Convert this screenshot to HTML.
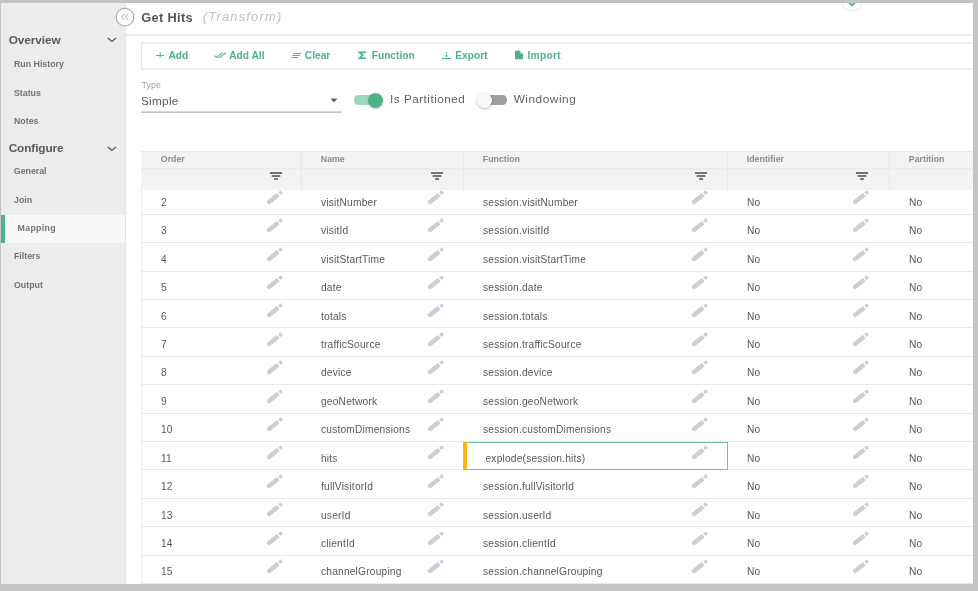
<!DOCTYPE html>
<html><head><meta charset="utf-8"><style>
html,body{margin:0;padding:0;width:978px;height:591px;overflow:hidden;background:#fff}
#w{position:absolute;left:0;top:0;width:978px;height:591px;overflow:hidden;filter:blur(0.35px)}
body{position:relative;font-family:"Liberation Sans",sans-serif}
.t{position:absolute;white-space:nowrap;line-height:1}
.r{position:absolute;display:block}
</style></head><body><div id="w">
<div class="r" style="left:0px;top:0px;width:126px;height:591px;background:#ebecee;"></div>
<div class="r" style="left:1px;top:215px;width:125px;height:28px;background:#f7f8f8;"></div>
<div class="r" style="left:1px;top:215px;width:4px;height:28px;background:#4cb287;"></div>
<div class="r" style="left:125px;top:0px;width:1px;height:591px;background:#e4e5e7;"></div>
<div class="t" style="left:8.80px;top:35.00px;font-size:11.8px;color:#595959;font-weight:bold;font-style:normal;letter-spacing:-0.1px;">Overview</div>
<div class="t" style="left:8.70px;top:143.00px;font-size:11.8px;color:#595959;font-weight:bold;font-style:normal;letter-spacing:-0.1px;">Configure</div>
<svg class="r" style="left:107.1px;top:37.1px" width="10" height="6" viewBox="0 0 10 6"><path d="M0.8 0.9 L4.9 4.4 L9.0 0.9" fill="none" stroke="#5a5a5a" stroke-width="1.3"/></svg>
<svg class="r" style="left:107.1px;top:145.7px" width="10" height="6" viewBox="0 0 10 6"><path d="M0.8 0.9 L4.9 4.4 L9.0 0.9" fill="none" stroke="#5a5a5a" stroke-width="1.3"/></svg>
<div class="t" style="left:14.00px;top:60.00px;font-size:8.8px;color:#727272;font-weight:bold;font-style:normal;letter-spacing:0px;">Run History</div>
<div class="t" style="left:14.00px;top:89.00px;font-size:8.8px;color:#727272;font-weight:bold;font-style:normal;letter-spacing:0px;">Status</div>
<div class="t" style="left:14.00px;top:117.00px;font-size:8.8px;color:#727272;font-weight:bold;font-style:normal;letter-spacing:0px;">Notes</div>
<div class="t" style="left:13.80px;top:167.00px;font-size:8.8px;color:#727272;font-weight:bold;font-style:normal;letter-spacing:0px;">General</div>
<div class="t" style="left:14.00px;top:196.00px;font-size:8.8px;color:#727272;font-weight:bold;font-style:normal;letter-spacing:0px;">Join</div>
<div class="t" style="left:17.60px;top:224.00px;font-size:8.8px;color:#727272;font-weight:bold;font-style:normal;letter-spacing:0.3px;">Mapping</div>
<div class="t" style="left:14.00px;top:252.00px;font-size:8.8px;color:#727272;font-weight:bold;font-style:normal;letter-spacing:0px;">Filters</div>
<div class="t" style="left:14.00px;top:281.00px;font-size:8.8px;color:#727272;font-weight:bold;font-style:normal;letter-spacing:0px;">Output</div>
<div class="r" style="left:126px;top:0px;width:847px;height:591px;background:#ffffff;"></div>
<div class="t" style="left:141.20px;top:12.00px;font-size:12.8px;color:#555;font-weight:bold;font-style:normal;letter-spacing:0.35px;">Get Hits</div>
<div class="t" style="left:202.80px;top:11.00px;font-size:12.8px;color:#b9c2cc;font-weight:normal;font-style:italic;letter-spacing:1.25px;">(Transform)</div>
<div class="r" style="left:126px;top:34px;width:847px;height:1px;background:#ebebeb;"></div>
<div class="r" style="left:126px;top:35px;width:847px;height:1px;background:#eeeeee;"></div>
<svg class="r" style="left:114.9px;top:7px" width="20" height="20" viewBox="0 0 20 20"><circle cx="10" cy="10.2" r="8.8" fill="#fff" stroke="#ababab" stroke-width="1.1"/><path d="M9.4 6.8 L6.5 9.9 L9.4 13 M13.3 6.8 L10.4 9.9 L13.3 13" fill="none" stroke="#a5a5a5" stroke-width="1"/></svg>
<svg class="r" style="left:839.6px;top:-12.3px" width="24" height="24" viewBox="0 0 24 24"><circle cx="12" cy="12" r="11" fill="#fff" stroke="#e2e5e8" stroke-width="1"/><path d="M8.6 14.2 L12 17.4 L15.4 14.2" fill="none" stroke="#4cb287" stroke-width="1.8"/></svg>
<div class="r" style="left:141px;top:42px;width:832px;height:1px;background:#eeeeee;"></div>
<div class="r" style="left:141px;top:43px;width:832px;height:1px;background:#f0f0f0;"></div>
<div class="r" style="left:141px;top:68px;width:832px;height:1px;background:#eeeeee;"></div>
<div class="r" style="left:141px;top:69px;width:832px;height:1px;background:#f0f0f0;"></div>
<div class="r" style="left:141px;top:42px;width:1px;height:28px;background:#e6e6e6;"></div>
<div class="t" style="left:168.40px;top:51.00px;font-size:10.2px;color:#4cb287;font-weight:bold;font-style:normal;letter-spacing:0px;">Add</div>
<div class="t" style="left:229.20px;top:51.00px;font-size:10.2px;color:#4cb287;font-weight:bold;font-style:normal;letter-spacing:0px;">Add All</div>
<div class="t" style="left:304.80px;top:51.00px;font-size:10.2px;color:#4cb287;font-weight:bold;font-style:normal;letter-spacing:0px;">Clear</div>
<div class="t" style="left:371.70px;top:51.00px;font-size:10.2px;color:#4cb287;font-weight:bold;font-style:normal;letter-spacing:0px;">Function</div>
<div class="t" style="left:455.30px;top:51.00px;font-size:10.2px;color:#4cb287;font-weight:bold;font-style:normal;letter-spacing:0px;">Export</div>
<div class="t" style="left:527.40px;top:51.00px;font-size:10.2px;color:#4cb287;font-weight:bold;font-style:normal;letter-spacing:0.3px;">Import</div>
<svg class="r" style="left:155px;top:50px" width="10" height="10" viewBox="0 0 10 10"><path d="M5.2 2.2V7.8M1.1 5.5H8.9" stroke="#4cb287" stroke-width="1.1"/></svg>
<svg class="r" style="left:213px;top:50px" width="14" height="10" viewBox="0 0 14 10"><path d="M1.4 5.8 L3.8 7.5 L9.2 2.8 M4.5 6.5 L6.6 7.5 L13 2.8" fill="none" stroke="#4cb287" stroke-width="1.2" stroke-opacity="0.85"/></svg>
<svg class="r" style="left:290px;top:50px" width="12" height="10" viewBox="0 0 12 10"><path d="M3.5 3.5H11 M2.5 5.5H10 M1.5 7.5H8" fill="none" stroke="#4cb287" stroke-width="1"/></svg>
<svg class="r" style="left:358px;top:50px" width="9" height="10" viewBox="0 0 9 10"><path d="M7.9 2.4H1.5L4.9 5.3L1.5 8.2H7.9" fill="none" stroke="#4cb287" stroke-width="1.6" stroke-linejoin="miter"/></svg>
<svg class="r" style="left:441px;top:50px" width="11" height="10" viewBox="0 0 11 10"><path d="M5.5 1.8V6.2" stroke="#4cb287" stroke-width="1" stroke-opacity="0.75"/><path d="M3.9 5.6H7.1L5.5 7.2Z" fill="#4cb287"/><path d="M1 8.5H10" stroke="#4cb287" stroke-width="1.1"/></svg>
<svg class="r" style="left:513.8px;top:50.2px" width="10" height="10" viewBox="0 0 10 10"><path d="M1 0.8H6L9 3.8V9.3H1Z" fill="#4cb287"/><path d="M6 0.8V3.8H9" fill="#b5e0cc"/></svg>
<div class="t" style="left:141.50px;top:81.00px;font-size:8.8px;color:#a0a0a0;font-weight:normal;font-style:normal;letter-spacing:0.1px;">Type</div>
<div class="t" style="left:141.00px;top:96.00px;font-size:11.8px;color:#5a5a5a;font-weight:normal;font-style:normal;letter-spacing:0.25px;">Simple</div>
<div class="r" style="left:141px;top:111px;width:201px;height:1px;background:#d8d8d8;"></div>
<div class="r" style="left:141px;top:112px;width:201px;height:1px;background:#c4c4c4;"></div>
<svg class="r" style="left:329.8px;top:98px" width="8" height="5" viewBox="0 0 8 5"><path d="M0.5 0.5H7.5L4 4.5Z" fill="#666"/></svg>
<div class="r" style="left:353.7px;top:95.4px;width:21px;height:9.2px;background:#9fd6be;border-radius:4.6px"></div>
<div class="r" style="left:367.7px;top:92.6px;width:15px;height:15px;border-radius:50%;background:#4cb287;box-shadow:0 1px 2px rgba(0,0,0,0.2)"></div>
<div class="t" style="left:390.10px;top:94.00px;font-size:11.8px;color:#606060;font-weight:normal;font-style:normal;letter-spacing:0.45px;">Is Partitioned</div>
<div class="r" style="left:479px;top:95.4px;width:28px;height:9.2px;background:#9e9e9e;border-radius:4.6px"></div>
<div class="r" style="left:477.2px;top:92.6px;width:15px;height:15px;border-radius:50%;background:#fafafa;box-shadow:0 1px 2.5px rgba(0,0,0,0.3)"></div>
<div class="t" style="left:513.70px;top:94.00px;font-size:11.8px;color:#606060;font-weight:normal;font-style:normal;letter-spacing:0.54px;">Windowing</div>
<div class="t" style="left:161.00px;top:198.00px;font-size:10.2px;color:#585858;font-weight:normal;font-style:normal;letter-spacing:0.2px;">2</div>
<div class="t" style="left:321.00px;top:198.00px;font-size:10.2px;color:#585858;font-weight:normal;font-style:normal;letter-spacing:0.2px;">visitNumber</div>
<div class="t" style="left:483.00px;top:198.00px;font-size:10.2px;color:#585858;font-weight:normal;font-style:normal;letter-spacing:0.2px;">session.visitNumber</div>
<div class="t" style="left:747.00px;top:198.00px;font-size:10.2px;color:#585858;font-weight:normal;font-style:normal;letter-spacing:0.2px;">No</div>
<div class="t" style="left:909.00px;top:198.00px;font-size:10.2px;color:#585858;font-weight:normal;font-style:normal;letter-spacing:0.2px;">No</div>
<div class="r" style="left:141px;top:214px;width:832px;height:1px;background:#e8e8e8;"></div>
<svg class="r" style="left:264.50px;top:188.40px" width="20" height="18" viewBox="-4 -14 20 18"><path d="M0 0 L6 -4.75" stroke="#c8cfd6" stroke-width="4.3" stroke-linecap="round"/><path d="M5 -3.96 L9.3 -7.35" stroke="#c8cfd6" stroke-width="4.3"/><path d="M10.3 -8.3 L12.9 -10.35" stroke="#c8cfd6" stroke-width="3.5"/></svg>
<svg class="r" style="left:426.30px;top:188.40px" width="20" height="18" viewBox="-4 -14 20 18"><path d="M0 0 L6 -4.75" stroke="#c8cfd6" stroke-width="4.3" stroke-linecap="round"/><path d="M5 -3.96 L9.3 -7.35" stroke="#c8cfd6" stroke-width="4.3"/><path d="M10.3 -8.3 L12.9 -10.35" stroke="#c8cfd6" stroke-width="3.5"/></svg>
<svg class="r" style="left:689.50px;top:188.40px" width="20" height="18" viewBox="-4 -14 20 18"><path d="M0 0 L6 -4.75" stroke="#c8cfd6" stroke-width="4.3" stroke-linecap="round"/><path d="M5 -3.96 L9.3 -7.35" stroke="#c8cfd6" stroke-width="4.3"/><path d="M10.3 -8.3 L12.9 -10.35" stroke="#c8cfd6" stroke-width="3.5"/></svg>
<svg class="r" style="left:850.90px;top:188.40px" width="20" height="18" viewBox="-4 -14 20 18"><path d="M0 0 L6 -4.75" stroke="#c8cfd6" stroke-width="4.3" stroke-linecap="round"/><path d="M5 -3.96 L9.3 -7.35" stroke="#c8cfd6" stroke-width="4.3"/><path d="M10.3 -8.3 L12.9 -10.35" stroke="#c8cfd6" stroke-width="3.5"/></svg>
<div class="t" style="left:161.00px;top:226.00px;font-size:10.2px;color:#585858;font-weight:normal;font-style:normal;letter-spacing:0.2px;">3</div>
<div class="t" style="left:321.00px;top:226.00px;font-size:10.2px;color:#585858;font-weight:normal;font-style:normal;letter-spacing:0.2px;">visitId</div>
<div class="t" style="left:483.00px;top:226.00px;font-size:10.2px;color:#585858;font-weight:normal;font-style:normal;letter-spacing:0.2px;">session.visitId</div>
<div class="t" style="left:747.00px;top:226.00px;font-size:10.2px;color:#585858;font-weight:normal;font-style:normal;letter-spacing:0.2px;">No</div>
<div class="t" style="left:909.00px;top:226.00px;font-size:10.2px;color:#585858;font-weight:normal;font-style:normal;letter-spacing:0.2px;">No</div>
<div class="r" style="left:141px;top:242px;width:832px;height:1px;background:#e8e8e8;"></div>
<svg class="r" style="left:264.50px;top:216.40px" width="20" height="18" viewBox="-4 -14 20 18"><path d="M0 0 L6 -4.75" stroke="#c8cfd6" stroke-width="4.3" stroke-linecap="round"/><path d="M5 -3.96 L9.3 -7.35" stroke="#c8cfd6" stroke-width="4.3"/><path d="M10.3 -8.3 L12.9 -10.35" stroke="#c8cfd6" stroke-width="3.5"/></svg>
<svg class="r" style="left:426.30px;top:216.40px" width="20" height="18" viewBox="-4 -14 20 18"><path d="M0 0 L6 -4.75" stroke="#c8cfd6" stroke-width="4.3" stroke-linecap="round"/><path d="M5 -3.96 L9.3 -7.35" stroke="#c8cfd6" stroke-width="4.3"/><path d="M10.3 -8.3 L12.9 -10.35" stroke="#c8cfd6" stroke-width="3.5"/></svg>
<svg class="r" style="left:689.50px;top:216.40px" width="20" height="18" viewBox="-4 -14 20 18"><path d="M0 0 L6 -4.75" stroke="#c8cfd6" stroke-width="4.3" stroke-linecap="round"/><path d="M5 -3.96 L9.3 -7.35" stroke="#c8cfd6" stroke-width="4.3"/><path d="M10.3 -8.3 L12.9 -10.35" stroke="#c8cfd6" stroke-width="3.5"/></svg>
<svg class="r" style="left:850.90px;top:216.40px" width="20" height="18" viewBox="-4 -14 20 18"><path d="M0 0 L6 -4.75" stroke="#c8cfd6" stroke-width="4.3" stroke-linecap="round"/><path d="M5 -3.96 L9.3 -7.35" stroke="#c8cfd6" stroke-width="4.3"/><path d="M10.3 -8.3 L12.9 -10.35" stroke="#c8cfd6" stroke-width="3.5"/></svg>
<div class="t" style="left:161.00px;top:255.00px;font-size:10.2px;color:#585858;font-weight:normal;font-style:normal;letter-spacing:0.2px;">4</div>
<div class="t" style="left:321.00px;top:255.00px;font-size:10.2px;color:#585858;font-weight:normal;font-style:normal;letter-spacing:0.2px;">visitStartTime</div>
<div class="t" style="left:483.00px;top:255.00px;font-size:10.2px;color:#585858;font-weight:normal;font-style:normal;letter-spacing:0.2px;">session.visitStartTime</div>
<div class="t" style="left:747.00px;top:255.00px;font-size:10.2px;color:#585858;font-weight:normal;font-style:normal;letter-spacing:0.2px;">No</div>
<div class="t" style="left:909.00px;top:255.00px;font-size:10.2px;color:#585858;font-weight:normal;font-style:normal;letter-spacing:0.2px;">No</div>
<div class="r" style="left:141px;top:271px;width:832px;height:1px;background:#e8e8e8;"></div>
<svg class="r" style="left:264.50px;top:245.40px" width="20" height="18" viewBox="-4 -14 20 18"><path d="M0 0 L6 -4.75" stroke="#c8cfd6" stroke-width="4.3" stroke-linecap="round"/><path d="M5 -3.96 L9.3 -7.35" stroke="#c8cfd6" stroke-width="4.3"/><path d="M10.3 -8.3 L12.9 -10.35" stroke="#c8cfd6" stroke-width="3.5"/></svg>
<svg class="r" style="left:426.30px;top:245.40px" width="20" height="18" viewBox="-4 -14 20 18"><path d="M0 0 L6 -4.75" stroke="#c8cfd6" stroke-width="4.3" stroke-linecap="round"/><path d="M5 -3.96 L9.3 -7.35" stroke="#c8cfd6" stroke-width="4.3"/><path d="M10.3 -8.3 L12.9 -10.35" stroke="#c8cfd6" stroke-width="3.5"/></svg>
<svg class="r" style="left:689.50px;top:245.40px" width="20" height="18" viewBox="-4 -14 20 18"><path d="M0 0 L6 -4.75" stroke="#c8cfd6" stroke-width="4.3" stroke-linecap="round"/><path d="M5 -3.96 L9.3 -7.35" stroke="#c8cfd6" stroke-width="4.3"/><path d="M10.3 -8.3 L12.9 -10.35" stroke="#c8cfd6" stroke-width="3.5"/></svg>
<svg class="r" style="left:850.90px;top:245.40px" width="20" height="18" viewBox="-4 -14 20 18"><path d="M0 0 L6 -4.75" stroke="#c8cfd6" stroke-width="4.3" stroke-linecap="round"/><path d="M5 -3.96 L9.3 -7.35" stroke="#c8cfd6" stroke-width="4.3"/><path d="M10.3 -8.3 L12.9 -10.35" stroke="#c8cfd6" stroke-width="3.5"/></svg>
<div class="t" style="left:161.00px;top:283.00px;font-size:10.2px;color:#585858;font-weight:normal;font-style:normal;letter-spacing:0.2px;">5</div>
<div class="t" style="left:321.00px;top:283.00px;font-size:10.2px;color:#585858;font-weight:normal;font-style:normal;letter-spacing:0.2px;">date</div>
<div class="t" style="left:483.00px;top:283.00px;font-size:10.2px;color:#585858;font-weight:normal;font-style:normal;letter-spacing:0.2px;">session.date</div>
<div class="t" style="left:747.00px;top:283.00px;font-size:10.2px;color:#585858;font-weight:normal;font-style:normal;letter-spacing:0.2px;">No</div>
<div class="t" style="left:909.00px;top:283.00px;font-size:10.2px;color:#585858;font-weight:normal;font-style:normal;letter-spacing:0.2px;">No</div>
<div class="r" style="left:141px;top:299px;width:832px;height:1px;background:#e8e8e8;"></div>
<svg class="r" style="left:264.50px;top:273.40px" width="20" height="18" viewBox="-4 -14 20 18"><path d="M0 0 L6 -4.75" stroke="#c8cfd6" stroke-width="4.3" stroke-linecap="round"/><path d="M5 -3.96 L9.3 -7.35" stroke="#c8cfd6" stroke-width="4.3"/><path d="M10.3 -8.3 L12.9 -10.35" stroke="#c8cfd6" stroke-width="3.5"/></svg>
<svg class="r" style="left:426.30px;top:273.40px" width="20" height="18" viewBox="-4 -14 20 18"><path d="M0 0 L6 -4.75" stroke="#c8cfd6" stroke-width="4.3" stroke-linecap="round"/><path d="M5 -3.96 L9.3 -7.35" stroke="#c8cfd6" stroke-width="4.3"/><path d="M10.3 -8.3 L12.9 -10.35" stroke="#c8cfd6" stroke-width="3.5"/></svg>
<svg class="r" style="left:689.50px;top:273.40px" width="20" height="18" viewBox="-4 -14 20 18"><path d="M0 0 L6 -4.75" stroke="#c8cfd6" stroke-width="4.3" stroke-linecap="round"/><path d="M5 -3.96 L9.3 -7.35" stroke="#c8cfd6" stroke-width="4.3"/><path d="M10.3 -8.3 L12.9 -10.35" stroke="#c8cfd6" stroke-width="3.5"/></svg>
<svg class="r" style="left:850.90px;top:273.40px" width="20" height="18" viewBox="-4 -14 20 18"><path d="M0 0 L6 -4.75" stroke="#c8cfd6" stroke-width="4.3" stroke-linecap="round"/><path d="M5 -3.96 L9.3 -7.35" stroke="#c8cfd6" stroke-width="4.3"/><path d="M10.3 -8.3 L12.9 -10.35" stroke="#c8cfd6" stroke-width="3.5"/></svg>
<div class="t" style="left:161.00px;top:312.00px;font-size:10.2px;color:#585858;font-weight:normal;font-style:normal;letter-spacing:0.2px;">6</div>
<div class="t" style="left:321.00px;top:312.00px;font-size:10.2px;color:#585858;font-weight:normal;font-style:normal;letter-spacing:0.2px;">totals</div>
<div class="t" style="left:483.00px;top:312.00px;font-size:10.2px;color:#585858;font-weight:normal;font-style:normal;letter-spacing:0.2px;">session.totals</div>
<div class="t" style="left:747.00px;top:312.00px;font-size:10.2px;color:#585858;font-weight:normal;font-style:normal;letter-spacing:0.2px;">No</div>
<div class="t" style="left:909.00px;top:312.00px;font-size:10.2px;color:#585858;font-weight:normal;font-style:normal;letter-spacing:0.2px;">No</div>
<div class="r" style="left:141px;top:327px;width:832px;height:1px;background:#e8e8e8;"></div>
<svg class="r" style="left:264.50px;top:301.40px" width="20" height="18" viewBox="-4 -14 20 18"><path d="M0 0 L6 -4.75" stroke="#c8cfd6" stroke-width="4.3" stroke-linecap="round"/><path d="M5 -3.96 L9.3 -7.35" stroke="#c8cfd6" stroke-width="4.3"/><path d="M10.3 -8.3 L12.9 -10.35" stroke="#c8cfd6" stroke-width="3.5"/></svg>
<svg class="r" style="left:426.30px;top:301.40px" width="20" height="18" viewBox="-4 -14 20 18"><path d="M0 0 L6 -4.75" stroke="#c8cfd6" stroke-width="4.3" stroke-linecap="round"/><path d="M5 -3.96 L9.3 -7.35" stroke="#c8cfd6" stroke-width="4.3"/><path d="M10.3 -8.3 L12.9 -10.35" stroke="#c8cfd6" stroke-width="3.5"/></svg>
<svg class="r" style="left:689.50px;top:301.40px" width="20" height="18" viewBox="-4 -14 20 18"><path d="M0 0 L6 -4.75" stroke="#c8cfd6" stroke-width="4.3" stroke-linecap="round"/><path d="M5 -3.96 L9.3 -7.35" stroke="#c8cfd6" stroke-width="4.3"/><path d="M10.3 -8.3 L12.9 -10.35" stroke="#c8cfd6" stroke-width="3.5"/></svg>
<svg class="r" style="left:850.90px;top:301.40px" width="20" height="18" viewBox="-4 -14 20 18"><path d="M0 0 L6 -4.75" stroke="#c8cfd6" stroke-width="4.3" stroke-linecap="round"/><path d="M5 -3.96 L9.3 -7.35" stroke="#c8cfd6" stroke-width="4.3"/><path d="M10.3 -8.3 L12.9 -10.35" stroke="#c8cfd6" stroke-width="3.5"/></svg>
<div class="t" style="left:161.00px;top:340.00px;font-size:10.2px;color:#585858;font-weight:normal;font-style:normal;letter-spacing:0.2px;">7</div>
<div class="t" style="left:321.00px;top:340.00px;font-size:10.2px;color:#585858;font-weight:normal;font-style:normal;letter-spacing:0.2px;">trafficSource</div>
<div class="t" style="left:483.00px;top:340.00px;font-size:10.2px;color:#585858;font-weight:normal;font-style:normal;letter-spacing:0.2px;">session.trafficSource</div>
<div class="t" style="left:747.00px;top:340.00px;font-size:10.2px;color:#585858;font-weight:normal;font-style:normal;letter-spacing:0.2px;">No</div>
<div class="t" style="left:909.00px;top:340.00px;font-size:10.2px;color:#585858;font-weight:normal;font-style:normal;letter-spacing:0.2px;">No</div>
<div class="r" style="left:141px;top:356px;width:832px;height:1px;background:#e8e8e8;"></div>
<svg class="r" style="left:264.50px;top:330.40px" width="20" height="18" viewBox="-4 -14 20 18"><path d="M0 0 L6 -4.75" stroke="#c8cfd6" stroke-width="4.3" stroke-linecap="round"/><path d="M5 -3.96 L9.3 -7.35" stroke="#c8cfd6" stroke-width="4.3"/><path d="M10.3 -8.3 L12.9 -10.35" stroke="#c8cfd6" stroke-width="3.5"/></svg>
<svg class="r" style="left:426.30px;top:330.40px" width="20" height="18" viewBox="-4 -14 20 18"><path d="M0 0 L6 -4.75" stroke="#c8cfd6" stroke-width="4.3" stroke-linecap="round"/><path d="M5 -3.96 L9.3 -7.35" stroke="#c8cfd6" stroke-width="4.3"/><path d="M10.3 -8.3 L12.9 -10.35" stroke="#c8cfd6" stroke-width="3.5"/></svg>
<svg class="r" style="left:689.50px;top:330.40px" width="20" height="18" viewBox="-4 -14 20 18"><path d="M0 0 L6 -4.75" stroke="#c8cfd6" stroke-width="4.3" stroke-linecap="round"/><path d="M5 -3.96 L9.3 -7.35" stroke="#c8cfd6" stroke-width="4.3"/><path d="M10.3 -8.3 L12.9 -10.35" stroke="#c8cfd6" stroke-width="3.5"/></svg>
<svg class="r" style="left:850.90px;top:330.40px" width="20" height="18" viewBox="-4 -14 20 18"><path d="M0 0 L6 -4.75" stroke="#c8cfd6" stroke-width="4.3" stroke-linecap="round"/><path d="M5 -3.96 L9.3 -7.35" stroke="#c8cfd6" stroke-width="4.3"/><path d="M10.3 -8.3 L12.9 -10.35" stroke="#c8cfd6" stroke-width="3.5"/></svg>
<div class="t" style="left:161.00px;top:368.00px;font-size:10.2px;color:#585858;font-weight:normal;font-style:normal;letter-spacing:0.2px;">8</div>
<div class="t" style="left:321.00px;top:368.00px;font-size:10.2px;color:#585858;font-weight:normal;font-style:normal;letter-spacing:0.2px;">device</div>
<div class="t" style="left:483.00px;top:368.00px;font-size:10.2px;color:#585858;font-weight:normal;font-style:normal;letter-spacing:0.2px;">session.device</div>
<div class="t" style="left:747.00px;top:368.00px;font-size:10.2px;color:#585858;font-weight:normal;font-style:normal;letter-spacing:0.2px;">No</div>
<div class="t" style="left:909.00px;top:368.00px;font-size:10.2px;color:#585858;font-weight:normal;font-style:normal;letter-spacing:0.2px;">No</div>
<div class="r" style="left:141px;top:384px;width:832px;height:1px;background:#e8e8e8;"></div>
<svg class="r" style="left:264.50px;top:358.40px" width="20" height="18" viewBox="-4 -14 20 18"><path d="M0 0 L6 -4.75" stroke="#c8cfd6" stroke-width="4.3" stroke-linecap="round"/><path d="M5 -3.96 L9.3 -7.35" stroke="#c8cfd6" stroke-width="4.3"/><path d="M10.3 -8.3 L12.9 -10.35" stroke="#c8cfd6" stroke-width="3.5"/></svg>
<svg class="r" style="left:426.30px;top:358.40px" width="20" height="18" viewBox="-4 -14 20 18"><path d="M0 0 L6 -4.75" stroke="#c8cfd6" stroke-width="4.3" stroke-linecap="round"/><path d="M5 -3.96 L9.3 -7.35" stroke="#c8cfd6" stroke-width="4.3"/><path d="M10.3 -8.3 L12.9 -10.35" stroke="#c8cfd6" stroke-width="3.5"/></svg>
<svg class="r" style="left:689.50px;top:358.40px" width="20" height="18" viewBox="-4 -14 20 18"><path d="M0 0 L6 -4.75" stroke="#c8cfd6" stroke-width="4.3" stroke-linecap="round"/><path d="M5 -3.96 L9.3 -7.35" stroke="#c8cfd6" stroke-width="4.3"/><path d="M10.3 -8.3 L12.9 -10.35" stroke="#c8cfd6" stroke-width="3.5"/></svg>
<svg class="r" style="left:850.90px;top:358.40px" width="20" height="18" viewBox="-4 -14 20 18"><path d="M0 0 L6 -4.75" stroke="#c8cfd6" stroke-width="4.3" stroke-linecap="round"/><path d="M5 -3.96 L9.3 -7.35" stroke="#c8cfd6" stroke-width="4.3"/><path d="M10.3 -8.3 L12.9 -10.35" stroke="#c8cfd6" stroke-width="3.5"/></svg>
<div class="t" style="left:161.00px;top:397.00px;font-size:10.2px;color:#585858;font-weight:normal;font-style:normal;letter-spacing:0.2px;">9</div>
<div class="t" style="left:321.00px;top:397.00px;font-size:10.2px;color:#585858;font-weight:normal;font-style:normal;letter-spacing:0.2px;">geoNetwork</div>
<div class="t" style="left:483.00px;top:397.00px;font-size:10.2px;color:#585858;font-weight:normal;font-style:normal;letter-spacing:0.2px;">session.geoNetwork</div>
<div class="t" style="left:747.00px;top:397.00px;font-size:10.2px;color:#585858;font-weight:normal;font-style:normal;letter-spacing:0.2px;">No</div>
<div class="t" style="left:909.00px;top:397.00px;font-size:10.2px;color:#585858;font-weight:normal;font-style:normal;letter-spacing:0.2px;">No</div>
<div class="r" style="left:141px;top:413px;width:832px;height:1px;background:#e8e8e8;"></div>
<svg class="r" style="left:264.50px;top:387.40px" width="20" height="18" viewBox="-4 -14 20 18"><path d="M0 0 L6 -4.75" stroke="#c8cfd6" stroke-width="4.3" stroke-linecap="round"/><path d="M5 -3.96 L9.3 -7.35" stroke="#c8cfd6" stroke-width="4.3"/><path d="M10.3 -8.3 L12.9 -10.35" stroke="#c8cfd6" stroke-width="3.5"/></svg>
<svg class="r" style="left:426.30px;top:387.40px" width="20" height="18" viewBox="-4 -14 20 18"><path d="M0 0 L6 -4.75" stroke="#c8cfd6" stroke-width="4.3" stroke-linecap="round"/><path d="M5 -3.96 L9.3 -7.35" stroke="#c8cfd6" stroke-width="4.3"/><path d="M10.3 -8.3 L12.9 -10.35" stroke="#c8cfd6" stroke-width="3.5"/></svg>
<svg class="r" style="left:689.50px;top:387.40px" width="20" height="18" viewBox="-4 -14 20 18"><path d="M0 0 L6 -4.75" stroke="#c8cfd6" stroke-width="4.3" stroke-linecap="round"/><path d="M5 -3.96 L9.3 -7.35" stroke="#c8cfd6" stroke-width="4.3"/><path d="M10.3 -8.3 L12.9 -10.35" stroke="#c8cfd6" stroke-width="3.5"/></svg>
<svg class="r" style="left:850.90px;top:387.40px" width="20" height="18" viewBox="-4 -14 20 18"><path d="M0 0 L6 -4.75" stroke="#c8cfd6" stroke-width="4.3" stroke-linecap="round"/><path d="M5 -3.96 L9.3 -7.35" stroke="#c8cfd6" stroke-width="4.3"/><path d="M10.3 -8.3 L12.9 -10.35" stroke="#c8cfd6" stroke-width="3.5"/></svg>
<div class="t" style="left:161.00px;top:425.00px;font-size:10.2px;color:#585858;font-weight:normal;font-style:normal;letter-spacing:0.2px;">10</div>
<div class="t" style="left:321.00px;top:425.00px;font-size:10.2px;color:#585858;font-weight:normal;font-style:normal;letter-spacing:0.2px;">customDimensions</div>
<div class="t" style="left:483.00px;top:425.00px;font-size:10.2px;color:#585858;font-weight:normal;font-style:normal;letter-spacing:0.2px;">session.customDimensions</div>
<div class="t" style="left:747.00px;top:425.00px;font-size:10.2px;color:#585858;font-weight:normal;font-style:normal;letter-spacing:0.2px;">No</div>
<div class="t" style="left:909.00px;top:425.00px;font-size:10.2px;color:#585858;font-weight:normal;font-style:normal;letter-spacing:0.2px;">No</div>
<div class="r" style="left:141px;top:441px;width:832px;height:1px;background:#e8e8e8;"></div>
<svg class="r" style="left:264.50px;top:415.40px" width="20" height="18" viewBox="-4 -14 20 18"><path d="M0 0 L6 -4.75" stroke="#c8cfd6" stroke-width="4.3" stroke-linecap="round"/><path d="M5 -3.96 L9.3 -7.35" stroke="#c8cfd6" stroke-width="4.3"/><path d="M10.3 -8.3 L12.9 -10.35" stroke="#c8cfd6" stroke-width="3.5"/></svg>
<svg class="r" style="left:426.30px;top:415.40px" width="20" height="18" viewBox="-4 -14 20 18"><path d="M0 0 L6 -4.75" stroke="#c8cfd6" stroke-width="4.3" stroke-linecap="round"/><path d="M5 -3.96 L9.3 -7.35" stroke="#c8cfd6" stroke-width="4.3"/><path d="M10.3 -8.3 L12.9 -10.35" stroke="#c8cfd6" stroke-width="3.5"/></svg>
<svg class="r" style="left:689.50px;top:415.40px" width="20" height="18" viewBox="-4 -14 20 18"><path d="M0 0 L6 -4.75" stroke="#c8cfd6" stroke-width="4.3" stroke-linecap="round"/><path d="M5 -3.96 L9.3 -7.35" stroke="#c8cfd6" stroke-width="4.3"/><path d="M10.3 -8.3 L12.9 -10.35" stroke="#c8cfd6" stroke-width="3.5"/></svg>
<svg class="r" style="left:850.90px;top:415.40px" width="20" height="18" viewBox="-4 -14 20 18"><path d="M0 0 L6 -4.75" stroke="#c8cfd6" stroke-width="4.3" stroke-linecap="round"/><path d="M5 -3.96 L9.3 -7.35" stroke="#c8cfd6" stroke-width="4.3"/><path d="M10.3 -8.3 L12.9 -10.35" stroke="#c8cfd6" stroke-width="3.5"/></svg>
<div class="t" style="left:161.00px;top:454.00px;font-size:10.2px;color:#585858;font-weight:normal;font-style:normal;letter-spacing:0.2px;">11</div>
<div class="t" style="left:321.00px;top:454.00px;font-size:10.2px;color:#585858;font-weight:normal;font-style:normal;letter-spacing:0.2px;">hits</div>
<div class="t" style="left:485.50px;top:454.00px;font-size:10.2px;color:#585858;font-weight:normal;font-style:normal;letter-spacing:0.2px;">explode(session.hits)</div>
<div class="t" style="left:747.00px;top:454.00px;font-size:10.2px;color:#585858;font-weight:normal;font-style:normal;letter-spacing:0.2px;">No</div>
<div class="t" style="left:909.00px;top:454.00px;font-size:10.2px;color:#585858;font-weight:normal;font-style:normal;letter-spacing:0.2px;">No</div>
<div class="r" style="left:141px;top:469px;width:832px;height:1px;background:#e8e8e8;"></div>
<svg class="r" style="left:264.50px;top:443.40px" width="20" height="18" viewBox="-4 -14 20 18"><path d="M0 0 L6 -4.75" stroke="#c8cfd6" stroke-width="4.3" stroke-linecap="round"/><path d="M5 -3.96 L9.3 -7.35" stroke="#c8cfd6" stroke-width="4.3"/><path d="M10.3 -8.3 L12.9 -10.35" stroke="#c8cfd6" stroke-width="3.5"/></svg>
<svg class="r" style="left:426.30px;top:443.40px" width="20" height="18" viewBox="-4 -14 20 18"><path d="M0 0 L6 -4.75" stroke="#c8cfd6" stroke-width="4.3" stroke-linecap="round"/><path d="M5 -3.96 L9.3 -7.35" stroke="#c8cfd6" stroke-width="4.3"/><path d="M10.3 -8.3 L12.9 -10.35" stroke="#c8cfd6" stroke-width="3.5"/></svg>
<svg class="r" style="left:689.50px;top:443.40px" width="20" height="18" viewBox="-4 -14 20 18"><path d="M0 0 L6 -4.75" stroke="#c8cfd6" stroke-width="4.3" stroke-linecap="round"/><path d="M5 -3.96 L9.3 -7.35" stroke="#c8cfd6" stroke-width="4.3"/><path d="M10.3 -8.3 L12.9 -10.35" stroke="#c8cfd6" stroke-width="3.5"/></svg>
<svg class="r" style="left:850.90px;top:443.40px" width="20" height="18" viewBox="-4 -14 20 18"><path d="M0 0 L6 -4.75" stroke="#c8cfd6" stroke-width="4.3" stroke-linecap="round"/><path d="M5 -3.96 L9.3 -7.35" stroke="#c8cfd6" stroke-width="4.3"/><path d="M10.3 -8.3 L12.9 -10.35" stroke="#c8cfd6" stroke-width="3.5"/></svg>
<div class="t" style="left:161.00px;top:482.00px;font-size:10.2px;color:#585858;font-weight:normal;font-style:normal;letter-spacing:0.2px;">12</div>
<div class="t" style="left:321.00px;top:482.00px;font-size:10.2px;color:#585858;font-weight:normal;font-style:normal;letter-spacing:0.2px;">fullVisitorId</div>
<div class="t" style="left:483.00px;top:482.00px;font-size:10.2px;color:#585858;font-weight:normal;font-style:normal;letter-spacing:0.2px;">session.fullVisitorId</div>
<div class="t" style="left:747.00px;top:482.00px;font-size:10.2px;color:#585858;font-weight:normal;font-style:normal;letter-spacing:0.2px;">No</div>
<div class="t" style="left:909.00px;top:482.00px;font-size:10.2px;color:#585858;font-weight:normal;font-style:normal;letter-spacing:0.2px;">No</div>
<div class="r" style="left:141px;top:498px;width:832px;height:1px;background:#e8e8e8;"></div>
<svg class="r" style="left:264.50px;top:472.40px" width="20" height="18" viewBox="-4 -14 20 18"><path d="M0 0 L6 -4.75" stroke="#c8cfd6" stroke-width="4.3" stroke-linecap="round"/><path d="M5 -3.96 L9.3 -7.35" stroke="#c8cfd6" stroke-width="4.3"/><path d="M10.3 -8.3 L12.9 -10.35" stroke="#c8cfd6" stroke-width="3.5"/></svg>
<svg class="r" style="left:426.30px;top:472.40px" width="20" height="18" viewBox="-4 -14 20 18"><path d="M0 0 L6 -4.75" stroke="#c8cfd6" stroke-width="4.3" stroke-linecap="round"/><path d="M5 -3.96 L9.3 -7.35" stroke="#c8cfd6" stroke-width="4.3"/><path d="M10.3 -8.3 L12.9 -10.35" stroke="#c8cfd6" stroke-width="3.5"/></svg>
<svg class="r" style="left:689.50px;top:472.40px" width="20" height="18" viewBox="-4 -14 20 18"><path d="M0 0 L6 -4.75" stroke="#c8cfd6" stroke-width="4.3" stroke-linecap="round"/><path d="M5 -3.96 L9.3 -7.35" stroke="#c8cfd6" stroke-width="4.3"/><path d="M10.3 -8.3 L12.9 -10.35" stroke="#c8cfd6" stroke-width="3.5"/></svg>
<svg class="r" style="left:850.90px;top:472.40px" width="20" height="18" viewBox="-4 -14 20 18"><path d="M0 0 L6 -4.75" stroke="#c8cfd6" stroke-width="4.3" stroke-linecap="round"/><path d="M5 -3.96 L9.3 -7.35" stroke="#c8cfd6" stroke-width="4.3"/><path d="M10.3 -8.3 L12.9 -10.35" stroke="#c8cfd6" stroke-width="3.5"/></svg>
<div class="t" style="left:161.00px;top:511.00px;font-size:10.2px;color:#585858;font-weight:normal;font-style:normal;letter-spacing:0.2px;">13</div>
<div class="t" style="left:321.00px;top:511.00px;font-size:10.2px;color:#585858;font-weight:normal;font-style:normal;letter-spacing:0.2px;">userId</div>
<div class="t" style="left:483.00px;top:511.00px;font-size:10.2px;color:#585858;font-weight:normal;font-style:normal;letter-spacing:0.2px;">session.userId</div>
<div class="t" style="left:747.00px;top:511.00px;font-size:10.2px;color:#585858;font-weight:normal;font-style:normal;letter-spacing:0.2px;">No</div>
<div class="t" style="left:909.00px;top:511.00px;font-size:10.2px;color:#585858;font-weight:normal;font-style:normal;letter-spacing:0.2px;">No</div>
<div class="r" style="left:141px;top:526px;width:832px;height:1px;background:#e8e8e8;"></div>
<svg class="r" style="left:264.50px;top:500.40px" width="20" height="18" viewBox="-4 -14 20 18"><path d="M0 0 L6 -4.75" stroke="#c8cfd6" stroke-width="4.3" stroke-linecap="round"/><path d="M5 -3.96 L9.3 -7.35" stroke="#c8cfd6" stroke-width="4.3"/><path d="M10.3 -8.3 L12.9 -10.35" stroke="#c8cfd6" stroke-width="3.5"/></svg>
<svg class="r" style="left:426.30px;top:500.40px" width="20" height="18" viewBox="-4 -14 20 18"><path d="M0 0 L6 -4.75" stroke="#c8cfd6" stroke-width="4.3" stroke-linecap="round"/><path d="M5 -3.96 L9.3 -7.35" stroke="#c8cfd6" stroke-width="4.3"/><path d="M10.3 -8.3 L12.9 -10.35" stroke="#c8cfd6" stroke-width="3.5"/></svg>
<svg class="r" style="left:689.50px;top:500.40px" width="20" height="18" viewBox="-4 -14 20 18"><path d="M0 0 L6 -4.75" stroke="#c8cfd6" stroke-width="4.3" stroke-linecap="round"/><path d="M5 -3.96 L9.3 -7.35" stroke="#c8cfd6" stroke-width="4.3"/><path d="M10.3 -8.3 L12.9 -10.35" stroke="#c8cfd6" stroke-width="3.5"/></svg>
<svg class="r" style="left:850.90px;top:500.40px" width="20" height="18" viewBox="-4 -14 20 18"><path d="M0 0 L6 -4.75" stroke="#c8cfd6" stroke-width="4.3" stroke-linecap="round"/><path d="M5 -3.96 L9.3 -7.35" stroke="#c8cfd6" stroke-width="4.3"/><path d="M10.3 -8.3 L12.9 -10.35" stroke="#c8cfd6" stroke-width="3.5"/></svg>
<div class="t" style="left:161.00px;top:539.00px;font-size:10.2px;color:#585858;font-weight:normal;font-style:normal;letter-spacing:0.2px;">14</div>
<div class="t" style="left:321.00px;top:539.00px;font-size:10.2px;color:#585858;font-weight:normal;font-style:normal;letter-spacing:0.2px;">clientId</div>
<div class="t" style="left:483.00px;top:539.00px;font-size:10.2px;color:#585858;font-weight:normal;font-style:normal;letter-spacing:0.2px;">session.clientId</div>
<div class="t" style="left:747.00px;top:539.00px;font-size:10.2px;color:#585858;font-weight:normal;font-style:normal;letter-spacing:0.2px;">No</div>
<div class="t" style="left:909.00px;top:539.00px;font-size:10.2px;color:#585858;font-weight:normal;font-style:normal;letter-spacing:0.2px;">No</div>
<div class="r" style="left:141px;top:555px;width:832px;height:1px;background:#e8e8e8;"></div>
<svg class="r" style="left:264.50px;top:529.40px" width="20" height="18" viewBox="-4 -14 20 18"><path d="M0 0 L6 -4.75" stroke="#c8cfd6" stroke-width="4.3" stroke-linecap="round"/><path d="M5 -3.96 L9.3 -7.35" stroke="#c8cfd6" stroke-width="4.3"/><path d="M10.3 -8.3 L12.9 -10.35" stroke="#c8cfd6" stroke-width="3.5"/></svg>
<svg class="r" style="left:426.30px;top:529.40px" width="20" height="18" viewBox="-4 -14 20 18"><path d="M0 0 L6 -4.75" stroke="#c8cfd6" stroke-width="4.3" stroke-linecap="round"/><path d="M5 -3.96 L9.3 -7.35" stroke="#c8cfd6" stroke-width="4.3"/><path d="M10.3 -8.3 L12.9 -10.35" stroke="#c8cfd6" stroke-width="3.5"/></svg>
<svg class="r" style="left:689.50px;top:529.40px" width="20" height="18" viewBox="-4 -14 20 18"><path d="M0 0 L6 -4.75" stroke="#c8cfd6" stroke-width="4.3" stroke-linecap="round"/><path d="M5 -3.96 L9.3 -7.35" stroke="#c8cfd6" stroke-width="4.3"/><path d="M10.3 -8.3 L12.9 -10.35" stroke="#c8cfd6" stroke-width="3.5"/></svg>
<svg class="r" style="left:850.90px;top:529.40px" width="20" height="18" viewBox="-4 -14 20 18"><path d="M0 0 L6 -4.75" stroke="#c8cfd6" stroke-width="4.3" stroke-linecap="round"/><path d="M5 -3.96 L9.3 -7.35" stroke="#c8cfd6" stroke-width="4.3"/><path d="M10.3 -8.3 L12.9 -10.35" stroke="#c8cfd6" stroke-width="3.5"/></svg>
<div class="t" style="left:161.00px;top:567.00px;font-size:10.2px;color:#585858;font-weight:normal;font-style:normal;letter-spacing:0.2px;">15</div>
<div class="t" style="left:321.00px;top:567.00px;font-size:10.2px;color:#585858;font-weight:normal;font-style:normal;letter-spacing:0.2px;">channelGrouping</div>
<div class="t" style="left:483.00px;top:567.00px;font-size:10.2px;color:#585858;font-weight:normal;font-style:normal;letter-spacing:0.2px;">session.channelGrouping</div>
<div class="t" style="left:747.00px;top:567.00px;font-size:10.2px;color:#585858;font-weight:normal;font-style:normal;letter-spacing:0.2px;">No</div>
<div class="t" style="left:909.00px;top:567.00px;font-size:10.2px;color:#585858;font-weight:normal;font-style:normal;letter-spacing:0.2px;">No</div>
<div class="r" style="left:141px;top:583px;width:832px;height:1px;background:#e8e8e8;"></div>
<svg class="r" style="left:264.50px;top:557.40px" width="20" height="18" viewBox="-4 -14 20 18"><path d="M0 0 L6 -4.75" stroke="#c8cfd6" stroke-width="4.3" stroke-linecap="round"/><path d="M5 -3.96 L9.3 -7.35" stroke="#c8cfd6" stroke-width="4.3"/><path d="M10.3 -8.3 L12.9 -10.35" stroke="#c8cfd6" stroke-width="3.5"/></svg>
<svg class="r" style="left:426.30px;top:557.40px" width="20" height="18" viewBox="-4 -14 20 18"><path d="M0 0 L6 -4.75" stroke="#c8cfd6" stroke-width="4.3" stroke-linecap="round"/><path d="M5 -3.96 L9.3 -7.35" stroke="#c8cfd6" stroke-width="4.3"/><path d="M10.3 -8.3 L12.9 -10.35" stroke="#c8cfd6" stroke-width="3.5"/></svg>
<svg class="r" style="left:689.50px;top:557.40px" width="20" height="18" viewBox="-4 -14 20 18"><path d="M0 0 L6 -4.75" stroke="#c8cfd6" stroke-width="4.3" stroke-linecap="round"/><path d="M5 -3.96 L9.3 -7.35" stroke="#c8cfd6" stroke-width="4.3"/><path d="M10.3 -8.3 L12.9 -10.35" stroke="#c8cfd6" stroke-width="3.5"/></svg>
<svg class="r" style="left:850.90px;top:557.40px" width="20" height="18" viewBox="-4 -14 20 18"><path d="M0 0 L6 -4.75" stroke="#c8cfd6" stroke-width="4.3" stroke-linecap="round"/><path d="M5 -3.96 L9.3 -7.35" stroke="#c8cfd6" stroke-width="4.3"/><path d="M10.3 -8.3 L12.9 -10.35" stroke="#c8cfd6" stroke-width="3.5"/></svg>
<div class="r" style="left:463px;top:442px;width:265px;height:28px;border:1px solid #6cc09c;box-sizing:border-box"></div>
<div class="r" style="left:463px;top:442px;width:4px;height:28px;background:#fbb415;"></div>
<div class="r" style="left:141px;top:190px;width:1px;height:400px;background:#ededed;"></div>
<div class="r" style="left:141px;top:151px;width:832px;height:39px;background:#f3f3f3;"></div>
<div class="r" style="left:141px;top:151px;width:832px;height:1px;background:#e8e8e8;"></div>
<div class="r" style="left:141px;top:168px;width:832px;height:1px;background:#ebebeb;"></div>
<div class="r" style="left:141px;top:169px;width:832px;height:1px;background:#eeeeee;"></div>
<div class="r" style="left:301px;top:151px;width:1px;height:39px;background:#e8e8e8;"></div>
<div class="r" style="left:463px;top:151px;width:1px;height:39px;background:#e8e8e8;"></div>
<div class="r" style="left:727px;top:151px;width:1px;height:39px;background:#e8e8e8;"></div>
<div class="r" style="left:889px;top:151px;width:1px;height:39px;background:#e8e8e8;"></div>
<div class="t" style="left:160.80px;top:155.00px;font-size:8.8px;color:#8c8c8c;font-weight:bold;font-style:normal;letter-spacing:0px;">Order</div>
<div class="t" style="left:320.80px;top:155.00px;font-size:8.8px;color:#8c8c8c;font-weight:bold;font-style:normal;letter-spacing:0px;">Name</div>
<div class="t" style="left:482.80px;top:155.00px;font-size:8.8px;color:#8c8c8c;font-weight:bold;font-style:normal;letter-spacing:0px;">Function</div>
<div class="t" style="left:746.80px;top:155.00px;font-size:8.8px;color:#8c8c8c;font-weight:bold;font-style:normal;letter-spacing:0px;">Identifier</div>
<div class="t" style="left:908.80px;top:155.00px;font-size:8.8px;color:#8c8c8c;font-weight:bold;font-style:normal;letter-spacing:0px;">Partition</div>
<svg class="r" style="left:268.60px;top:170px" width="14" height="11" viewBox="0 0 14 11"><path d="M0.9 3H13.1 M2.65 6H11.35 M5.1 8.9H8.9" stroke="#4a4a4a" stroke-width="1.5"/></svg>
<svg class="r" style="left:429.80px;top:170px" width="14" height="11" viewBox="0 0 14 11"><path d="M0.9 3H13.1 M2.65 6H11.35 M5.1 8.9H8.9" stroke="#4a4a4a" stroke-width="1.5"/></svg>
<svg class="r" style="left:693.60px;top:170px" width="14" height="11" viewBox="0 0 14 11"><path d="M0.9 3H13.1 M2.65 6H11.35 M5.1 8.9H8.9" stroke="#4a4a4a" stroke-width="1.5"/></svg>
<svg class="r" style="left:855.00px;top:170px" width="14" height="11" viewBox="0 0 14 11"><path d="M0.9 3H13.1 M2.65 6H11.35 M5.1 8.9H8.9" stroke="#4a4a4a" stroke-width="1.5"/></svg>
<div class="r" style="left:0px;top:0px;width:978px;height:3px;background:#c3c3c3;"></div>
<div class="r" style="left:0px;top:0px;width:1px;height:591px;background:#c3c3c3;"></div>
<div class="r" style="left:973px;top:0px;width:5px;height:591px;background:#c3c3c3;"></div>
<div class="r" style="left:0px;top:584px;width:978px;height:7px;background:#c3c3c3;"></div>
</div></body></html>
